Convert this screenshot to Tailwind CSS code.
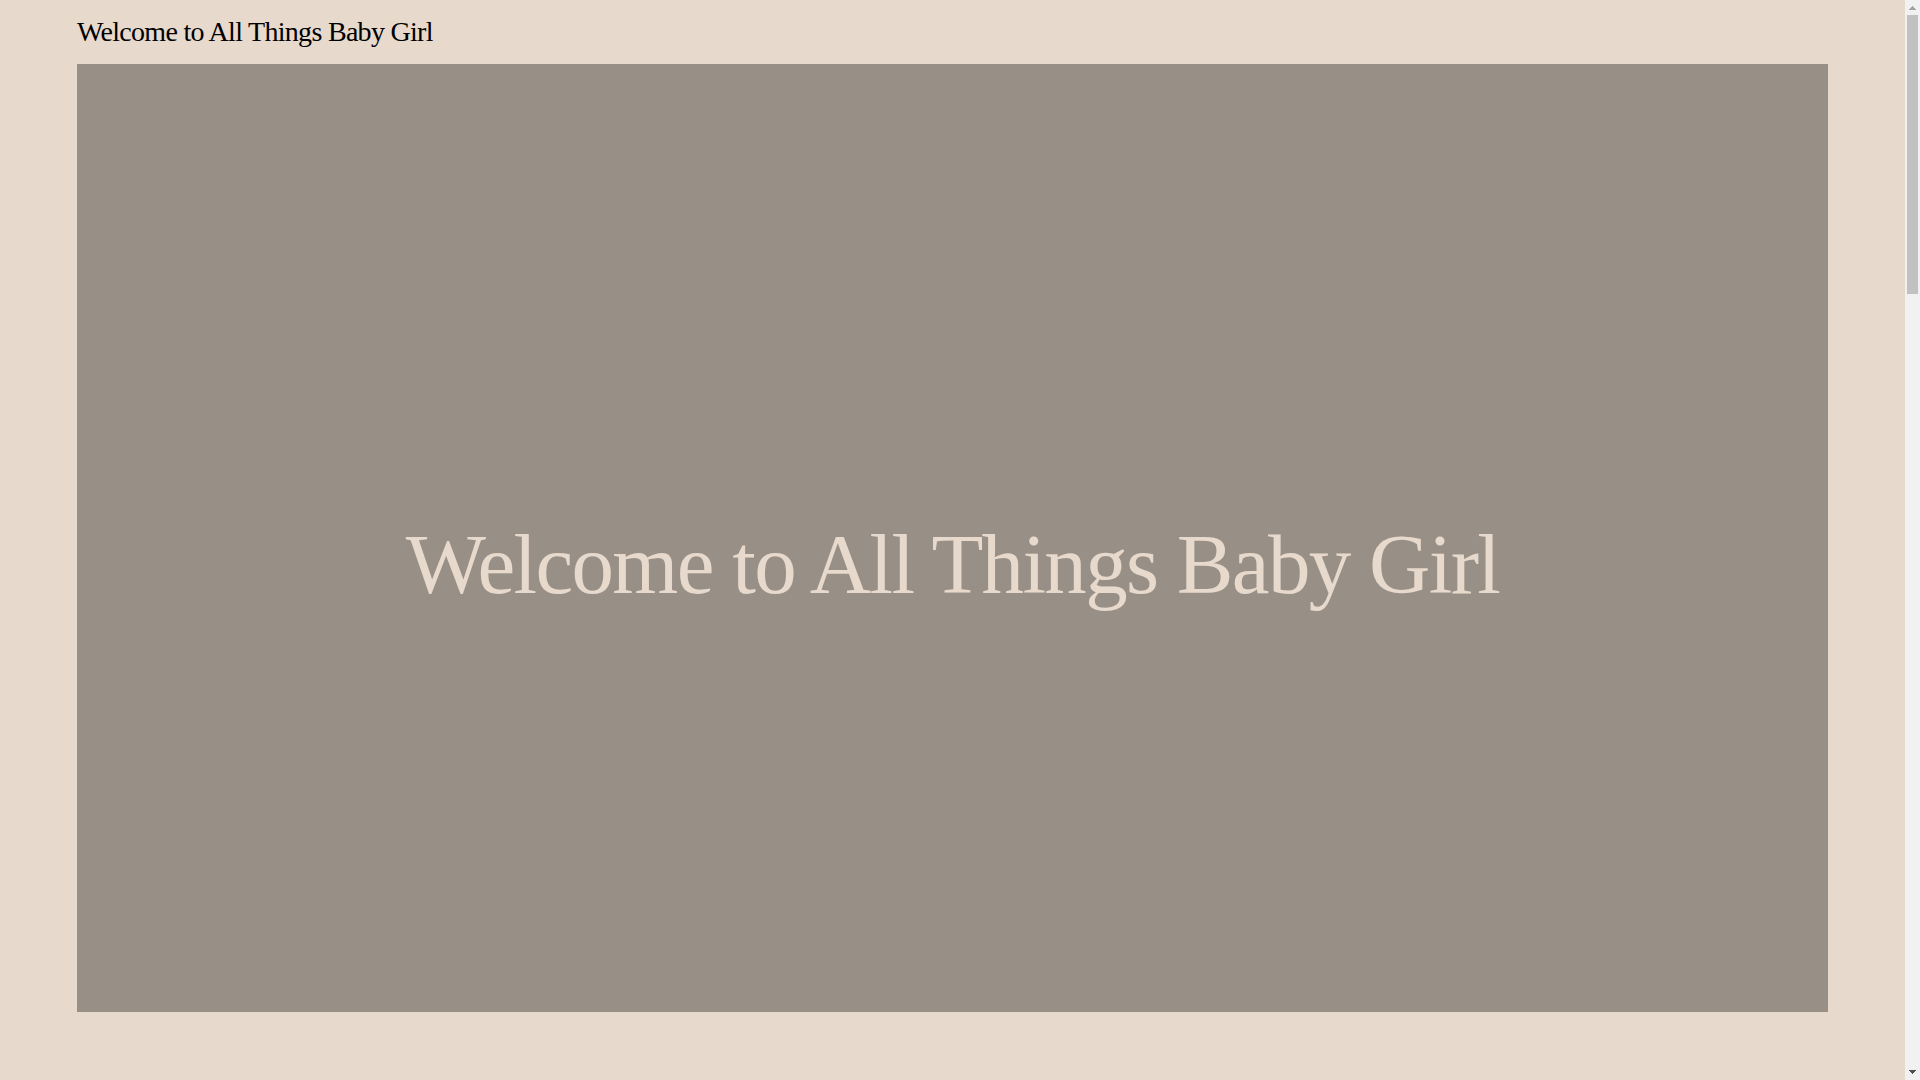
<!DOCTYPE html>
<html lang="en">
<head>
  <meta charset="UTF-8" />
  <meta name="viewport" content="width=device-width, initial-scale=1.0" />
  <title>All Things Baby Girl</title>
  <script src="https://cdn.jsdelivr.net/npm/@tailwindcss/browser@4"></script>
</head>
<body class="flex h-screen overflow-hidden bg-[#e7d9cc] font-['Liberation_Serif',serif] text-black">

  <!-- Page -->
  <div class="flex min-w-0 flex-1 flex-col px-[77px] pb-17">
    <header class="flex h-16 shrink-0 items-center">
      <p class="text-[28px] leading-8 tracking-tight">Welcome to All Things Baby Girl</p>
    </header>

    <!-- Hero -->
    <main class="flex flex-1 items-center justify-center bg-[#988f86] pt-13">
      <h1 class="text-center text-[85px] leading-24 tracking-[-0.02em] text-[#e7d9cc]">Welcome to All Things Baby Girl</h1>
    </main>
  </div>

  <!-- Scrollbar -->
  <div class="flex w-[15px] shrink-0 flex-col items-center justify-between bg-[#f1f1f1]" aria-hidden="true">
    <div class="flex w-full flex-1 flex-col items-center">
      <svg class="h-[15px] w-[15px] shrink-0" viewBox="0 0 15 15" shape-rendering="crispEdges">
        <path d="M7 6h1v1h1v1h1v1h1v1H4V9h1V8h1V7h1z" fill="#a3a3a3" />
      </svg>
      <div class="h-[279px] w-[11px] bg-[#c1c1c1]"></div>
    </div>
    <svg class="h-[15px] w-[15px] shrink-0" viewBox="0 0 15 15" shape-rendering="crispEdges">
      <path d="M4 5h7v1h-1v1H9v1H8v1H7V8H6V7H5V6H4z" fill="#505050" />
    </svg>
  </div>

</body>
</html>
